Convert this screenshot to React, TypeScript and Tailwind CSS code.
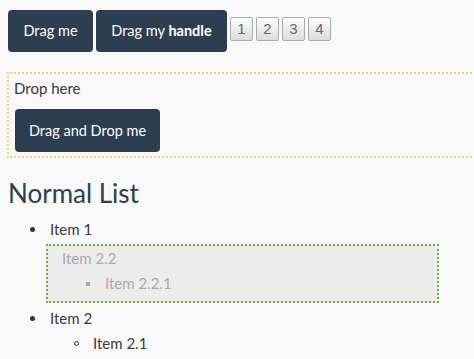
export default function App() {
  return (
    <div
      className="w-[474px] h-[359px] overflow-hidden bg-[#f9f9f9] text-[15px] text-[#3a3a3a]"
      style={{ fontFamily: 'Lato, "Open Sans", sans-serif' }}
    >
      {/* draggable buttons */}
      <div className="flex items-start gap-[3px] pt-[10px] pl-[8px]">
        <button className="h-[42px] w-[85px] rounded-[4px] bg-[#2c3e50] text-[14.5px] text-white">Drag me</button>
        <button className="h-[42px] w-[131px] rounded-[4px] bg-[#2c3e50] text-[14.5px] text-white">
          Drag my <b className="font-bold">handle</b>
        </button>
        {['1', '2', '3', '4'].map((n) => (
          <div
            key={n}
            className="mt-[7px] flex h-[24px] w-[23px] items-center justify-center rounded-[2px] border border-[#aaaaaa] bg-gradient-to-b from-[#fdfdfd] to-[#dcdcdc] text-[15px] text-[#666]"
            style={{ fontFamily: '"Liberation Sans", Arial, sans-serif' }}
          >
            {n}
          </div>
        ))}
      </div>

      {/* drop zone */}
      <div className="mt-[20px] ml-[7px] w-[480px] border-2 border-dotted border-[#f3d27a] pt-[1px] pb-[4px] pl-[5px]">
        <div className="leading-[26px]">Drop here</div>
        <button className="mt-[8px] ml-px h-[43px] w-[145px] rounded-[4px] bg-[#2c3e50] text-[14.5px] text-white">
          Drag and Drop me
        </button>
      </div>

      <h2 className="mt-[21px] ml-[8px] text-[26px] leading-[29px] text-[#2c3e50]">Normal List</h2>

      {/* list */}
      <div className="mt-[9px] leading-[25px]">
        <div className="flex h-[25px] items-center">
          <span className="ml-[30px] h-[5px] w-[5px] rounded-full bg-[#333]" />
          <span className="ml-[15px]">Item 1</span>
        </div>
        <div className="mt-[2px] ml-[46px] w-[393px] border-2 border-dotted border-[#6aaf3d] bg-[#ececec] pb-[5px] text-[#aaaaaa]">
          <div className="pl-[14px]">Item 2.2</div>
          <div className="flex h-[25px] items-center">
            <span className="ml-[38px] h-[4px] w-[4px] bg-[#aaa]" />
            <span className="ml-[15px]">Item 2.2.1</span>
          </div>
        </div>
        <div className="mt-[3px] flex h-[25px] items-center">
          <span className="ml-[30px] h-[5px] w-[5px] rounded-full bg-[#333]" />
          <span className="ml-[15px]">Item 2</span>
        </div>
        <div className="flex h-[25px] items-center">
          <span className="ml-[74px] h-[5px] w-[5px] rounded-full border border-[#333]" />
          <span className="ml-[14px]">Item 2.1</span>
        </div>
      </div>
    </div>
  );
}
